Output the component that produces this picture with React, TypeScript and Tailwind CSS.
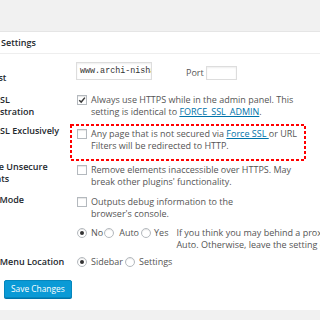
import React from "react";

const font = "font-['Open_Sans','Liberation_Sans',sans-serif]";

function Checkbox({ checked }: { checked?: boolean }) {
  return (
    <span className="w-[10px] h-[10px] mt-[1px] shrink-0 border border-[#b4b9be] bg-white shadow-[inset_0_1px_1px_rgba(0,0,0,0.1)] flex items-center justify-center">
      {checked && (
        <svg viewBox="0 0 10 10" className="w-[8px] h-[8px]">
          <path d="M1.5 5.2 L4 7.6 L8.6 2" fill="none" stroke="#3a3a3a" strokeWidth="1.8" />
        </svg>
      )}
    </span>
  );
}

function Radio({ checked }: { checked?: boolean }) {
  return (
    <span className="w-[10px] h-[10px] shrink-0 rounded-full border border-[#b4b9be] bg-white shadow-[inset_0_1px_1px_rgba(0,0,0,0.1)] flex items-center justify-center">
      {checked && <span className="w-[4px] h-[4px] rounded-full bg-[#333]" />}
    </span>
  );
}

function Row({
  label,
  labelShift = 0,
  pt,
  children,
}: {
  label: React.ReactNode;
  labelShift?: number;
  pt: string;
  children: React.ReactNode;
}) {
  return (
    <div className={`flex ${pt}`}>
      <div
        className="w-[112px] pl-[5px] shrink-0 font-semibold text-[#23282d] leading-[11.5px]"
        style={{ marginTop: labelShift }}
      >
        {label}
      </div>
      <div className="flex-1">{children}</div>
    </div>
  );
}

export default function App() {
  return (
    <div className={`relative w-[320px] h-[320px] overflow-hidden bg-[#f1f1f1] ${font} text-[9px] leading-[12px] text-[#555]`}>
      <div className="h-[31px]" />
      <div className="-ml-[36px] w-[420px] h-[279px] bg-white border-t border-[#e5e5e5]">
        <div className="h-[22px] border-b border-[#eee] flex items-center pl-[37px] text-[9px] font-semibold text-[#23282d]">
          Settings
        </div>

        <Row label="SSL Host" labelShift={10} pt="pt-[8px]">
          <div className="flex items-end">
            <div className="w-[76px] h-[18px] border border-[#ddd] shadow-[inset_0_1px_2px_rgba(0,0,0,0.07)] overflow-hidden whitespace-nowrap pl-[3px] flex items-center font-['Liberation_Mono',monospace] text-[8.4px] text-[#333]">
              www.archi-nishad.com
            </div>
            <span className="ml-[34px] mr-[2px] mb-[1px]">Port</span>
            <div className="w-[31px] h-[14px] border border-[#ddd] shadow-[inset_0_1px_2px_rgba(0,0,0,0.07)]" />
          </div>
          <div className="h-[7px]" />
        </Row>

        <Row
          label={
            <>
              Force SSL
              <br />
              Administration
            </>
          }
          labelShift={0}
          pt="pt-[7px]"
        >
          <div className="flex pl-[1px]">
            <Checkbox checked />
            <p className="ml-[4px] w-[212px]">
              Always use HTTPS while in the admin panel. This setting is identical to{" "}
              <span className="text-[#0073aa] underline">FORCE_SSL_ADMIN</span>.
            </p>
          </div>
        </Row>

        <Row label="Force SSL Exclusively" labelShift={-3} pt="pt-[10px]">
          <div className="flex pl-[1px]">
            <Checkbox />
            <p className="ml-[4px] w-[212px]">
              Any page that is not secured via{" "}
              <span className="text-[#0073aa] underline">Force SSL </span>or URL Filters will be redirected to HTTP.
            </p>
          </div>
        </Row>

        <Row
          label={
            <>
              Remove Unsecure
              <br />
              Elements
            </>
          }
          labelShift={-3}
          pt="pt-[12px]"
        >
          <div className="flex pl-[1px]">
            <Checkbox />
            <p className="ml-[4px] w-[212px]">
              Remove elements inaccessible over HTTPS. May break other plugins' functionality.
            </p>
          </div>
        </Row>

        <Row label="Debug Mode" labelShift={-2} pt="pt-[8px]">
          <div className="flex pl-[1px]">
            <Checkbox />
            <p className="ml-[4px] w-[150px]">Outputs debug information to the browser's console.</p>
          </div>
        </Row>

        <Row label="Proxy" labelShift={0} pt="pt-[7px]">
          <div className="flex items-start pl-[1px]">
            <div className="flex items-center whitespace-nowrap">
              <Radio checked />
              <span className="ml-[4px]">No</span>
              <span className="ml-[1px]">
                <Radio />
              </span>
              <span className="ml-[5px]">Auto</span>
              <span className="ml-[2px]">
                <Radio />
              </span>
              <span className="ml-[3px]">Yes</span>
            </div>
            <p className="ml-[8px] w-[200px] whitespace-nowrap">
              If you think you may behind a proxy, set to
              <br />
              Auto. Otherwise, leave the setting on No.
            </p>
          </div>
        </Row>

        <Row label="Admin Menu Location" labelShift={0} pt="pt-[5px]">
          <div className="flex items-center pl-[1px] whitespace-nowrap">
            <Radio checked />
            <span className="ml-[4px]">Sidebar</span>
            <span className="ml-[2px]">
              <Radio />
            </span>
            <span className="ml-[4px]">Settings</span>
          </div>
        </Row>

        <div className="pl-[40px] pt-[12px]">
          <button className="h-[18px] px-[6px] rounded-[2px] bg-[#0a9ad6] border border-[#0587bd] text-white text-[8.4px] leading-[16px] shadow-[0_1px_0_#0073aa]">
            Save Changes
          </button>
        </div>
      </div>

      <svg className="absolute left-[70px] top-[124px]" width="236" height="37">
        <rect
          x="1"
          y="1"
          width="234"
          height="35"
          fill="none"
          stroke="#f00"
          strokeWidth="2"
          strokeDasharray="3 2"
        />
      </svg>
    </div>
  );
}
